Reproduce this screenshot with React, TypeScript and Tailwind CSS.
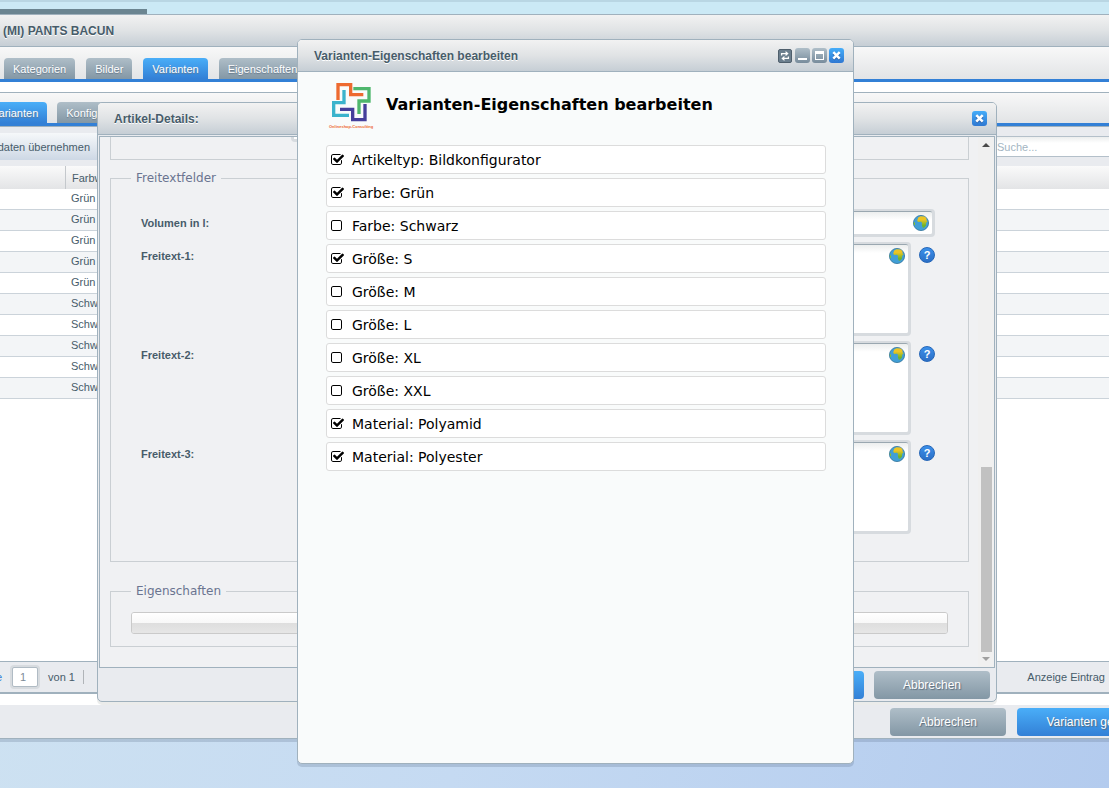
import type { ReactNode } from "react";

import clsx from "clsx";

type Property = { label: string; checked: boolean };

const PROPERTIES: Property[] = [
    { label: "Artikeltyp: Bildkonfigurator", checked: true },
    { label: "Farbe: Grün", checked: true },
    { label: "Farbe: Schwarz", checked: false },
    { label: "Größe: S", checked: true },
    { label: "Größe: M", checked: false },
    { label: "Größe: L", checked: false },
    { label: "Größe: XL", checked: false },
    { label: "Größe: XXL", checked: false },
    { label: "Material: Polyamid", checked: true },
    { label: "Material: Polyester", checked: true },
];

const VARIANT_COLORS = [
    "Grün",
    "Grün",
    "Grün",
    "Grün",
    "Grün",
    "Schwarz",
    "Schwarz",
    "Schwarz",
    "Schwarz",
    "Schwarz",
];

const Tab = ({ label, active }: { label: string; active?: boolean }) => (
    <button
        type="button"
        className={clsx(
            "h-[21px] shrink-0 rounded-t-[4px] bg-linear-to-b px-[9px] pt-[2px] text-[11px] text-white [text-shadow:0_1px_1px_#66788a]",
            active
                ? "from-[#4aaef8] to-[#3380d6]"
                : "from-[#afbec8] to-[#8397a5]",
        )}
    >
        {label}
    </button>
);

const ActionButton = ({
    label,
    primary,
}: {
    label: string;
    primary?: boolean;
}) => (
    <button
        type="button"
        className={clsx(
            "h-7 w-[116px] shrink-0 rounded-[4px] bg-linear-to-b text-xs whitespace-nowrap text-white [text-shadow:1px_1px_1px_#5a6c7c]",
            primary
                ? "from-[#4aaef8] to-[#3380d6]"
                : "from-[#afbec8] to-[#8397a5]",
        )}
    >
        {label}
    </button>
);

const TitleBar = ({
    title,
    children,
}: {
    title: string;
    children?: ReactNode;
}) => (
    <header className="flex h-8 items-center justify-between rounded-t-[4px] border-b border-[#a0b1bd] bg-linear-to-b from-[#f2f2f2] via-[#e0e3e5] to-[#c6ced5] pr-[9px] pl-4">
        <h2 className="text-xs font-bold [text-shadow:0_1px_0_#fff]">
            {title}
        </h2>
        <div className="flex items-center gap-[2px]">{children}</div>
    </header>
);

const CloseButton = () => (
    <button
        type="button"
        aria-label="Schließen"
        className="size-[15px] rounded-[3px] bg-linear-to-b from-[#45adf9] to-[#2f78d2]"
    >
        <svg viewBox="0 0 15 15" className="size-[15px]">
            <path
                d="M4.5 4.5l6 6M10.5 4.5l-6 6"
                stroke="#2a62ac"
                strokeWidth="2.6"
                transform="translate(0 1)"
            />
            <path
                d="M4.3 4.2l6.4 6.4M10.7 4.2l-6.4 6.4"
                stroke="#fff"
                strokeWidth="2.5"
            />
        </svg>
    </button>
);

const WindowTools = () => (
    <>
        <button
            type="button"
            aria-label="Neu laden"
            className="mr-px size-[14px] rounded-[2px] border border-[#4f5f6c] bg-[#6b7e8d]"
        >
            <svg
                viewBox="0 0 12 12"
                className="size-3"
                fill="none"
                stroke="#fff"
                strokeWidth="1.3"
            >
                <path d="M2.6 5.6V3.6H7.5M9.4 6.4v2H4.5" />
                <path
                    d="M6.6 1L9.6 3.6l-3 2.6zM5.4 5.8L2.4 8.4l3 2.6z"
                    fill="#fff"
                    stroke="none"
                />
            </svg>
        </button>
        <button
            type="button"
            aria-label="Minimieren"
            className="size-[15px] rounded-[3px] bg-linear-to-b from-[#afbec8] to-[#788c9c]"
        >
            <svg viewBox="0 0 15 15" className="size-[15px]">
                <path d="M3 10h9v2H3z" fill="#fff" />
            </svg>
        </button>
        <button
            type="button"
            aria-label="Maximieren"
            className="size-[15px] rounded-[3px] bg-linear-to-b from-[#afbec8] to-[#788c9c]"
        >
            <svg viewBox="0 0 15 15" className="size-[15px]">
                <path
                    d="M3 3h9v9H3zM4 6v5h7V6z"
                    fill="#fff"
                    fillRule="evenodd"
                />
            </svg>
        </button>
        <CloseButton />
    </>
);

const Globe = () => (
    <svg viewBox="0 0 16 16" className="size-4">
        <defs>
            <linearGradient id="land" x1="0" y1="0" x2="0" y2="1">
                <stop offset="0.3" stopColor="#ecc423" />
                <stop offset="0.8" stopColor="#6fb52c" />
            </linearGradient>
        </defs>
        <circle
            cx="8"
            cy="8"
            r="7.6"
            fill="#419fd6"
            stroke="#31739c"
            strokeWidth="0.8"
        />
        <path
            d="M5.2 2.4L7.5 1.2l4 .2 1.8 1.6.3 2.6 1 .6-1.4 1.6-.2 2.6-2 2.4-1.4-.2-.8-2.8.4-1.8-1.2-1.2-3 .2-.8-1.6z"
            fill="url(#land)"
        />
        <path d="M.6 7.2l1.3.4.2 1.8-.9 1.2z" fill="#8cc02b" />
    </svg>
);

const HelpIcon = () => (
    <button
        type="button"
        aria-label="Hilfe"
        className="mt-[5px] flex size-4 shrink-0 items-center justify-center rounded-full border border-[#2566b8] bg-linear-to-b from-[#3b90ea] to-[#2c6fc6] text-[11px] leading-none font-bold text-white"
    >
        ?
    </button>
);

const FieldFrame = ({ children }: { children: ReactNode }) => (
    <div className="relative flex-1 rounded-[4px] bg-[#d7dbdf] px-[3px] pt-[2px] pb-[3px]">
        {children}
        <span className="absolute top-[6px] right-[6px]">
            <Globe />
        </span>
    </div>
);

const INNER_FIELD =
    "block w-full resize-none rounded-[2px] border-t border-[#9aa7b0] bg-white bg-linear-to-b from-[#eceeee] to-white to-[8px] pr-7 pl-1 text-[11px] outline-none";

const FreeText = ({ id, label }: { id: string; label: string }) => (
    <div className="flex">
        <label
            htmlFor={id}
            className="w-40 shrink-0 pt-[6px] text-[11px] leading-4 font-bold"
        >
            {label}
        </label>
        <div className="flex flex-1 gap-2">
            <FieldFrame>
                <textarea id={id} className={clsx(INNER_FIELD, "h-[89px]")} />
            </FieldFrame>
            <HelpIcon />
        </div>
    </div>
);

const ArrowGlyph = ({ down }: { down?: boolean }) => (
    <svg viewBox="0 0 8 4" className="h-1 w-2">
        <path
            d={down ? "M0 0h8L4 4z" : "M0 4h8L4 0z"}
            fill={down ? "#a0a0a0" : "#4a4a4a"}
        />
    </svg>
);

const ArticleDetails = () => (
    <section className="absolute top-[102px] right-[112px] left-[97px] rounded-[5px] border border-[#a0b1bd] bg-[#e9ebef] shadow-[0_3px_0_rgba(120,130,120,0.15)]">
        <TitleBar title="Artikel-Details:">
            <CloseButton />
        </TitleBar>
        <div className="mx-px mt-px flex border border-[#a0b1bd] bg-[#f0f1f3]">
            <div className="flex-1 pr-[9px] pb-5 pl-[10px]">
                <div className="h-[23px] border border-t-0 border-[#cacfd3] pl-[180px]">
                    <div className="h-[5px] w-[500px] rounded-b-[4px] bg-[#d7dbdf] px-[3px] pb-[3px]">
                        <div className="h-[2px] bg-white" />
                    </div>
                </div>
                <fieldset className="mt-[10px] border border-[#cacfd3] pb-[27px]">
                    <legend className="ml-5 px-[5px] font-['DejaVu_Sans',sans-serif] text-xs text-[#6a7490]">
                        Freitextfelder
                    </legend>
                    <div className="flex flex-col gap-[5px] pt-[23px] pr-[33px] pl-[30px]">
                        <div className="flex items-center">
                            <label
                                htmlFor="volume"
                                className="w-40 shrink-0 text-[11px] font-bold"
                            >
                                Volumen in l:
                            </label>
                            <FieldFrame>
                                <input
                                    id="volume"
                                    type="text"
                                    className={clsx(INNER_FIELD, "h-[23px]")}
                                />
                            </FieldFrame>
                        </div>
                        <FreeText id="freetext-1" label="Freitext-1:" />
                        <FreeText id="freetext-2" label="Freitext-2:" />
                        <FreeText id="freetext-3" label="Freitext-3:" />
                    </div>
                </fieldset>
                <fieldset className="mt-[21px] border border-[#cacfd3] px-5 pt-[13px] pb-3">
                    <legend className="px-[5px] font-['DejaVu_Sans',sans-serif] text-xs text-[#6a7490]">
                        Eigenschaften
                    </legend>
                    <div className="flex h-[22px] flex-col overflow-hidden rounded-[3px] border border-[#cacaca]">
                        <div className="flex-1 bg-linear-to-b from-white to-[#f8f8f8]" />
                        <div className="flex-1 bg-linear-to-b from-[#dedede] to-[#e6e6e6]" />
                    </div>
                </fieldset>
            </div>
            <div className="flex w-4 flex-col items-center bg-[#f0f0f0] py-[6px]">
                <ArrowGlyph />
                <div className="mt-auto mb-[5px] h-[185px] w-[11px] bg-[#c1c1c1]" />
                <ArrowGlyph down />
            </div>
        </div>
        <footer className="flex justify-end gap-[10px] px-[6px] pt-[3px] pb-[2px]">
            <ActionButton label="Speichern" primary />
            <ActionButton label="Abbrechen" />
        </footer>
    </section>
);

const Logo = () => (
    <svg
        viewBox="24 21 144 144"
        className="size-12"
        fill="none"
        strokeWidth="10"
        role="img"
        aria-label="Onlineshop-Consulting"
    >
        <path d="M54 75V29H92V59H130" stroke="#ee6a30" />
        <path d="M100 41H147V78H117V117" stroke="#4fb76d" />
        <path d="M72 45V83H41V121H87" stroke="#3bb3cc" />
        <path d="M60 103H98V134H135V87" stroke="#453f9b" />
        <text
            x="27"
            y="160"
            fontSize="12"
            fontWeight="bold"
            fill="#ee6a30"
            fontFamily="Liberation Sans, sans-serif"
        >
            Onlineshop-Consulting
        </text>
    </svg>
);

const PropertyRow = ({ label, checked }: Property) => (
    <li className="rounded-[3px] border border-[#dcdcdc] bg-white">
        <label className="flex h-[27px] items-center pl-1 text-sm">
            <span className="relative mr-[7px] size-[14px]">
                <input
                    type="checkbox"
                    defaultChecked={checked}
                    className="peer absolute inset-0 appearance-none"
                />
                <svg
                    viewBox="192 0 1792 1792"
                    className="pointer-events-none size-[14px] peer-checked:hidden"
                >
                    <path d="M1312 256h-832q-66 0-113 47t-47 113v832q0 66 47 113t113 47h832q66 0 113-47t47-113v-832q0-66-47-113t-113-47zm288 160v832q0 119-84.5 203.5t-203.5 84.5h-832q-119 0-203.5-84.5t-84.5-203.5v-832q0-119 84.5-203.5t203.5-84.5h832q119 0 203.5 84.5t84.5 203.5z" />
                </svg>
                <svg
                    viewBox="64 0 1792 1792"
                    className="pointer-events-none hidden size-[14px] peer-checked:block"
                >
                    <path d="M1472 930v318q0 119-84.5 203.5t-203.5 84.5h-832q-119 0-203.5-84.5t-84.5-203.5v-832q0-119 84.5-203.5t203.5-84.5h832q63 0 117 25 15 7 18 23 3 17-9 29l-49 49q-10 10-23 10-3 0-9-2-23-6-45-6h-832q-66 0-113 47t-47 113v832q0 66 47 113t113 47h832q66 0 113-47t47-113v-254q0-13 9-22l64-64q10-10 23-10 6 0 12 3 20 8 20 29zm231-489l-814 814q-24 24-57 24t-57-24l-430-430q-24-24-24-57t24-57l110-110q24-24 57-24t57 24l263 263 647-647q24-24 57-24t57 24l110 110q24 24 24 57t-24 57z" />
                </svg>
            </span>
            {label}
        </label>
    </li>
);

const PropertiesWindow = () => (
    <section className="absolute top-[39px] bottom-6 left-[297px] w-[557px] rounded-[5px] border border-[#a0b1bd] bg-[#f9fbfb] shadow-[0_3px_0_rgba(90,110,140,0.25)]">
        <TitleBar title="Varianten-Eigenschaften bearbeiten">
            <WindowTools />
        </TitleBar>
        <div className="pt-[10px] pr-[27px] pl-7 font-['DejaVu_Sans',sans-serif] text-black">
            <div className="flex items-center gap-[10px] pl-[2px]">
                <Logo />
                <h1 className="pb-[2px] text-base font-bold">
                    Varianten-Eigenschaften bearbeiten
                </h1>
            </div>
            <ul className="mt-[15px] flex flex-col gap-1">
                {PROPERTIES.map((property) => (
                    <PropertyRow key={property.label} {...property} />
                ))}
            </ul>
        </div>
    </section>
);

const VariantTable = () => (
    <table className="w-full table-fixed border-separate border-spacing-0 text-left text-[11px]">
        <colgroup>
            <col className="w-[66px]" />
            <col />
        </colgroup>
        <thead>
            <tr className="h-[23px] bg-linear-to-b from-[#fafafa] to-[#e3e4e6]">
                <th className="border-r border-[#c4c8cc] p-0" />
                <th className="p-0 pt-px pl-[6px] font-normal">Farbwert</th>
            </tr>
        </thead>
        <tbody>
            {VARIANT_COLORS.map((color, index) => (
                <tr key={index} className="h-[21px] even:bg-[#f3f5f7]">
                    <td className="border-b border-[#cbd3da] p-0" />
                    <td className="border-b border-[#cbd3da] p-0 pb-[2px] pl-[5px] leading-[18px]">
                        {color}
                    </td>
                </tr>
            ))}
        </tbody>
    </table>
);

const ArticleWindow = () => (
    <main className="flex flex-1 flex-col border-y border-[#a0b1bd] bg-white shadow-[0_3px_0_rgba(90,110,140,0.25)]">
        <header className="flex h-8 items-center border-b border-[#a0b1bd] bg-linear-to-b from-[#f2f2f2] via-[#e0e3e5] to-[#c6ced5] pl-[3px]">
            <h2 className="text-xs font-bold [text-shadow:0_1px_0_#fff]">
                (MI) PANTS BACUN
            </h2>
        </header>
        <nav className="flex h-[35px] items-end gap-[11px] border-b-3 border-[#3380d6] bg-linear-to-b from-[#f8f8f8] to-[#e2e4e6] pl-1">
            <Tab label="Kategorien" />
            <Tab label="Bilder" />
            <Tab label="Varianten" active />
            <Tab label="Eigenschaften" />
        </nav>
        <div className="mt-[10px] border-y border-[#a0b1bd]">
            <nav className="flex h-[33px] items-end gap-[10px] border-b-3 border-[#3380d6] bg-linear-to-b from-[#f8f8f8] to-[#e2e4e6]">
                <div className="-ml-[17px] flex">
                    <Tab label="Varianten" active />
                </div>
                <Tab label="Konfigurator" />
            </nav>
        </div>
        <div className="flex h-[39px] items-center justify-between bg-[#e9ebef]">
            <button
                type="button"
                className="-ml-10 h-[27px] w-[137px] bg-linear-to-b from-[#f6f8fa] to-[#cdd8e5] pt-[2px] pr-[7px] text-right text-[11px] whitespace-nowrap"
            >
                Stammdaten übernehmen
            </button>
            <input
                type="search"
                aria-label="Suche"
                placeholder="Suche..."
                className="h-[21px] w-[124px] border-y border-[#b4c0ca] bg-white bg-linear-to-b from-[#eceeee] to-white to-[6px] pl-3 text-[11px] outline-none placeholder:text-[#a3b5c2]"
            />
        </div>
        <VariantTable />
        <div className="mt-auto flex h-[33px] items-center border-t border-b-2 border-[#a0b1bd] bg-[#e9ebef] text-[11px]">
            <label htmlFor="page" className="-ml-[23px] text-[#3380d6]">
                Seite
            </label>
            <span className="ml-2 rounded-[4px] bg-[#d7dbdf] p-[2px]">
                <input
                    id="page"
                    type="text"
                    defaultValue="1"
                    className="block h-5 w-[26px] rounded-[2px] border border-[#b0bbc4] bg-white pl-[7px] text-[11px] text-[#7d8c98] outline-none"
                />
            </span>
            <span className="ml-2">von 1</span>
            <span className="ml-2 h-[14px] w-px bg-[#b0b4b8]" />
            <span className="ml-auto pr-1">Anzeige Eintrag</span>
        </div>
        <footer className="mt-[11px] flex h-[33px] items-center justify-end gap-[11px] overflow-hidden bg-[#e9ebef]">
            <ActionButton label="Abbrechen" />
            <div className="w-[92px]">
                <button
                    type="button"
                    className="h-7 w-[170px] rounded-[4px] bg-linear-to-b from-[#4aaef8] to-[#3380d6] text-xs whitespace-nowrap text-white [text-shadow:1px_1px_1px_#5a6c7c]"
                >
                    Varianten generieren
                </button>
            </div>
        </footer>
    </main>
);

export default function App() {
    return (
        <div className="relative flex min-h-screen flex-col overflow-hidden bg-linear-105 from-[#d0e4f1] via-[#c5daf2] to-[#b3cbee] pb-[49px] font-['Liberation_Sans',Arial,sans-serif] text-[#475c6a]">
            <div className="flex h-[14px] items-end border-t-2 border-[#b9d6e3] bg-[#cbe9f5]">
                <div className="h-[5px] w-[147px] bg-[#6b8591]" />
            </div>
            <ArticleWindow />
            <ArticleDetails />
            <PropertiesWindow />
        </div>
    );
}
